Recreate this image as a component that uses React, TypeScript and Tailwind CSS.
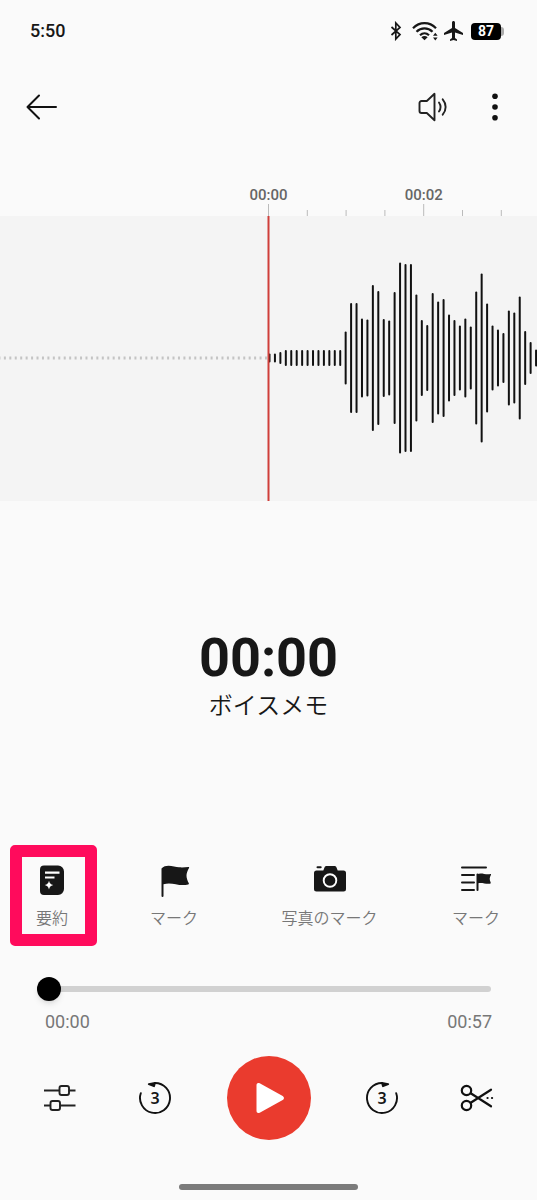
import { useState } from "react";
import type { ReactNode } from "react";

const BAR_PITCH = 5.44;
const SECOND_TICK = 38.8;

const levels = [
  9, 9, 12, 16, 16, 16, 16, 16, 16, 16, 16, 16, 16, 16, 53, 110, 110, 79, 77, 146, 134, 78, 75, 132, 191,
  188, 188, 127, 76, 66, 130, 113, 118, 87, 76, 65, 79, 63, 133, 169, 109, 65, 57, 50, 95, 91, 123, 54, 32, 17,
];

const tools = [
  { label: "要約", icon: <SummaryIcon />, highlighted: true },
  { label: "マーク", icon: <FlagIcon />, highlighted: false },
  { label: "写真のマーク", icon: <CameraIcon />, highlighted: false },
  { label: "マーク", icon: <MarkListIcon />, highlighted: false },
];

export default function App() {
  return (
    <main className="flex min-h-screen flex-col bg-[#fafafa] font-[Roboto,'Noto_Sans_CJK_JP',sans-serif] text-[#171717]">
      <StatusBar />
      <TopBar />
      <Ruler />
      <Waveform />

      <section className="flex flex-col items-center pt-[125px]">
        <div className="text-[54px] leading-[64px] font-bold">00:00</div>
        <h1 className="text-2xl leading-8 font-[350]">ボイスメモ</h1>
      </section>

      <div className="mt-[123px] grid grid-cols-[104fr_140fr_171fr_122fr]">
        {tools.map((tool, i) => (
          <button key={i} type="button" className="relative flex h-[101px] flex-col items-center pt-[18px]">
            {tool.icon}
            <span className="mt-[10px] text-base leading-6 font-[350] whitespace-nowrap text-[#777]">{tool.label}</span>
            {tool.highlighted && (
              <span className="absolute inset-y-0 right-[7px] left-[10px] rounded-[5px] border-12 border-[#ff0b5c]" />
            )}
          </button>
        ))}
      </div>

      <Seek />
      <Controls />

      <div className="mx-auto mt-auto mb-[10px] h-[6px] w-1/3 rounded-full bg-[#7b7b7b]" />
    </main>
  );
}

function StatusBar() {
  return (
    <div className="flex h-[62px] items-center justify-between pr-[33px] pl-[30px]">
      <span className="text-[18px] leading-6 font-medium">5:50</span>
      <div className="flex items-center">
        <svg width="12" height="20" viewBox="0 0 12 20" fill="none" stroke="#171717" strokeWidth="1.7" aria-label="Bluetooth">
          <path d="M1.5 6 10 13.5 5.8 18V2L10 6.5 1.5 14" />
        </svg>
        <svg className="ml-[10px]" width="26" height="20" viewBox="0 0 26 20" fill="none" stroke="#171717" strokeWidth="2.2" aria-label="Wi-Fi">
          <path d="M1 7.2C7.5.4 17.5.4 24 7.2" />
          <path d="M4.5 10.8c4.5-4.6 11.5-4.6 16 0" />
          <path d="M8 14.2c2.7-2.6 6.3-2.6 9 0" />
          <path d="m9.300 16.200 3.200 3 3.200-3c-1.900-1.600-4.500-1.600-6.400 0Z" fill="#171717" stroke="none" />
          <path d="m21 14.800 2.300-3 2.300 3Zm0 1.800 2.300 3 2.300-3Z" fill="#171717" stroke="none" />
        </svg>
        <svg className="ml-[4px]" width="24" height="24" viewBox="0 0 24 24" fill="#171717" aria-label="Airplane mode">
          <path d="M21 16v-2l-8-5V3.5c0-.83-.67-1.5-1.5-1.5S10 2.670 10 3.500V9l-8 5v2l8-2.500V19l-2 1.500V22l3.500-1 3.500 1v-1.500L13 19v-5.500l8 2.500z" />
        </svg>
        <div className="ml-[5px] flex items-center">
          <span className="flex h-[17px] w-[30px] items-center justify-center rounded-[4px] bg-black text-[14px] leading-[17px] font-bold text-white">
            87
          </span>
          <span className="h-[9px] w-[3px] rounded-r-full bg-[#aaa]" />
        </div>
      </div>
    </div>
  );
}

function TopBar() {
  return (
    <header className="flex h-[90px] items-center justify-between pr-[37px] pl-[25px]">
      <button type="button" aria-label="戻る">
        <svg width="34" height="28" viewBox="0 0 34 28" fill="none" stroke="#111" strokeWidth="2" strokeLinecap="round" strokeLinejoin="round">
          <path d="M31 14H2.5M14 2.5 2.5 14 14 25.5" />
        </svg>
      </button>
      <div className="flex items-center gap-[42px]">
        <button type="button" aria-label="スピーカー">
          <svg width="32" height="32" viewBox="0 0 32 32" fill="none" stroke="#222" strokeWidth="1.9" strokeLinejoin="round" strokeLinecap="round">
            <path d="M18.500 2.800v26.400L10.800 22H5.500A2 2 0 0 1 3.500 20v-8a2 2 0 0 1 2-2h5.300Z" />
            <path d="M23 11.500c1.800 2.600 1.800 6.400 0 9M26.700 8.300c3.900 4.500 3.900 10.900 0 15.400" />
          </svg>
        </button>
        <button type="button" aria-label="その他">
          <svg width="10" height="32" viewBox="0 0 10 32" fill="#111">
            <circle cx="5" cy="5.3" r="2.8" />
            <circle cx="5" cy="16" r="2.8" />
            <circle cx="5" cy="26.7" r="2.8" />
          </svg>
        </button>
      </div>
    </header>
  );
}

// x = 0 inside the nested svg is the playhead, in the middle of the window
function Ruler() {
  return (
    <svg className="h-16 w-full" aria-label="タイムライン">
      <svg x="50%" overflow="visible">
        {[0, 1, 2, 3, 4, 5, 6].map((n) => (
          <path key={n} d={`M${n * SECOND_TICK} ${n % 4 === 0 ? 52 : 58}V64`} stroke="#bbb" />
        ))}
        <g fill="#666" fontSize="15" fontWeight="500" textAnchor="middle">
          <text x="0" y="48">00:00</text>
          <text x={SECOND_TICK * 4} y="48">00:02</text>
        </g>
      </svg>
    </svg>
  );
}

function Waveform() {
  return (
    <svg className="h-[285px] w-full bg-[#f4f4f4]" aria-label="波形">
      <svg x="50%" overflow="visible">
        <path d="M-1.5 142H-2000" stroke="#c4c4c4" strokeWidth="3" strokeDasharray="2 3.44" />
        {levels.map((h, i) => (
          <rect key={i} x={i * BAR_PITCH} y={142 - h / 2} width="2" height={h} rx="1" fill="#111" />
        ))}
        <rect x="-1" width="2" height="285" fill="#cf3f3a" />
      </svg>
    </svg>
  );
}

function Seek() {
  const [position, setPosition] = useState(0);

  return (
    <div className="mt-[31px]">
      <div className="flex pr-[46px] pl-[37px]">
        <input
          type="range"
          min={0}
          max={57}
          value={position}
          onChange={(e) => setPosition(Number(e.target.value))}
          aria-label="再生位置"
          className="h-6 w-full appearance-none bg-transparent [&::-webkit-slider-runnable-track]:h-[6px] [&::-webkit-slider-runnable-track]:rounded-full [&::-webkit-slider-runnable-track]:bg-[#d1d1d1] [&::-webkit-slider-thumb]:mt-[-9px] [&::-webkit-slider-thumb]:size-6 [&::-webkit-slider-thumb]:appearance-none [&::-webkit-slider-thumb]:rounded-full [&::-webkit-slider-thumb]:bg-black [&::-webkit-slider-thumb]:shadow-md"
        />
      </div>
      <div className="mt-[9px] flex justify-between px-[45px] text-[18px] leading-6 text-[#777]">
        <span>00:00</span>
        <span>00:57</span>
      </div>
    </div>
  );
}

function Controls() {
  return (
    <div className="mt-[22px] mb-10 grid grid-cols-[120fr_70fr_157fr_70fr_120fr] place-items-center">
      <button type="button" aria-label="設定">
        <svg width="34" height="34" viewBox="0 0 34 34" fill="none" stroke="#222" strokeWidth="1.9">
          <path d="M1 9.500h15M26 9.500h6.500M1 24.500h6M17 24.500h15.500" />
          <rect x="16.5" y="5" width="9.5" height="9" rx="2" />
          <rect x="7.5" y="20" width="9.5" height="9" rx="2" />
        </svg>
      </button>
      <SkipButton label="3秒戻る">
        <path d="M2.800 12.200A15 15 0 1 0 17 2" />
        <path d="M10.800 3.200 17 2l-1 3.200Z" fill="#111" />
      </SkipButton>
      <button type="button" aria-label="再生" className="flex size-[84px] items-center justify-center rounded-full bg-[#ea3b2e]">
        <svg width="32" height="32" viewBox="0 0 32 32" fill="#fff">
          <path d="M3.500 3.200v25.600c0 2 1.500 2.800 3.200 1.900l23-12.600c1.700-.9 1.700-3.300 0-4.200l-23-12.600C5 .4 3.500 1.200 3.500 3.200Z" />
        </svg>
      </button>
      <SkipButton label="3秒進む">
        <path d="M31.200 12.200A15 15 0 1 1 17 2" />
        <path d="M23.200 3.200 17 2l1 3.200Z" fill="#111" />
      </SkipButton>
      <button type="button" aria-label="トリミング">
        <svg width="34" height="34" viewBox="0 0 34 34" fill="none" stroke="#111" strokeWidth="2.2" strokeLinecap="round">
          <circle cx="6.500" cy="9.500" r="4.700" />
          <circle cx="6.500" cy="24.500" r="4.700" />
          <path d="m10.700 12.300 20.300 13M10.700 21.700 31 8.700" />
          <path d="M27.500 17h.1M32 17h.1" />
        </svg>
      </button>
    </div>
  );
}

function SkipButton({ label, children }: { label: string; children: ReactNode }) {
  return (
    <button type="button" aria-label={label} className="grid place-items-center">
      <svg className="col-start-1 row-start-1" width="34" height="34" viewBox="0 0 34 34" fill="none" stroke="#111" strokeWidth="1.9" strokeLinecap="round" strokeLinejoin="round">
        {children}
      </svg>
      <span className="col-start-1 row-start-1 font-['Noto_Sans'] text-base leading-5 font-semibold">3</span>
    </button>
  );
}

function SummaryIcon() {
  return (
    <svg width="34" height="34" viewBox="0 0 34 34">
      <path d="M9 2.500h14a6 6 0 0 1 6 6V26a6 6 0 0 1-6 6H9a4 4 0 0 1-4-4V6.500a4 4 0 0 1 4-4Z" fill="#171717" />
      <path d="M10 9.700h14.500M10 14.500h9.500" stroke="#fff" strokeWidth="2.2" />
      <path d="M14 17.800c.7 2.700 1.500 3.500 4.300 4.300-2.800.8-3.600 1.600-4.300 4.400-.7-2.800-1.500-3.600-4.300-4.400 2.800-.8 3.600-1.600 4.300-4.300Z" fill="#fff" />
    </svg>
  );
}

function FlagIcon() {
  return (
    <svg width="34" height="34" viewBox="0 0 34 34" fill="#171717">
      <path d="M4.500 5.500C9 .5 17 3.800 22 4.300c3.500.3 6 0 9.500-.3.700 0 .8.500.5 1-3.500 6.300-3 9.500-.2 15.300.3.600 0 1-.6 1.100-9.200 2.600-16.200-3-24.700-.1V33a1 1 0 0 1-2 0Z" />
    </svg>
  );
}

function CameraIcon() {
  return (
    <svg width="34" height="34" viewBox="0 0 34 34">
      <path d="M4.500 4.200h3.200" stroke="#171717" strokeWidth="2" strokeLinecap="round" />
      <path d="M3.500 7.500h6.800l1.200-3c.4-1 1-1.500 2-1.500h8c1 0 1.600.5 2 1.500l1.200 3h5.800a2.500 2.500 0 0 1 2.500 2.500v16a2.500 2.500 0 0 1-2.500 2.500h-27A2.500 2.500 0 0 1 1 26V10a2.500 2.500 0 0 1 2.500-2.500Z" fill="#171717" />
      <circle cx="17" cy="17.500" r="6.300" fill="none" stroke="#fff" strokeWidth="1.9" />
    </svg>
  );
}

function MarkListIcon() {
  return (
    <svg width="34" height="34" viewBox="0 0 34 34" fill="none" stroke="#171717" strokeWidth="2" strokeLinecap="round">
      <path d="M3 4.500h24M3 12h12M3 19.500h12M3 27h12" />
      <path d="M18.500 27V11.500" />
      <path d="M18.200 11.300c4.300-2 8 .8 13.200-.2.600-.1.800.3.500.8-1.600 3-1.500 4.500-.2 7.700.2.600 0 1-.6 1.100-4.500.7-8-1.500-12.900-.2Z" fill="#171717" stroke="none" />
    </svg>
  );
}
